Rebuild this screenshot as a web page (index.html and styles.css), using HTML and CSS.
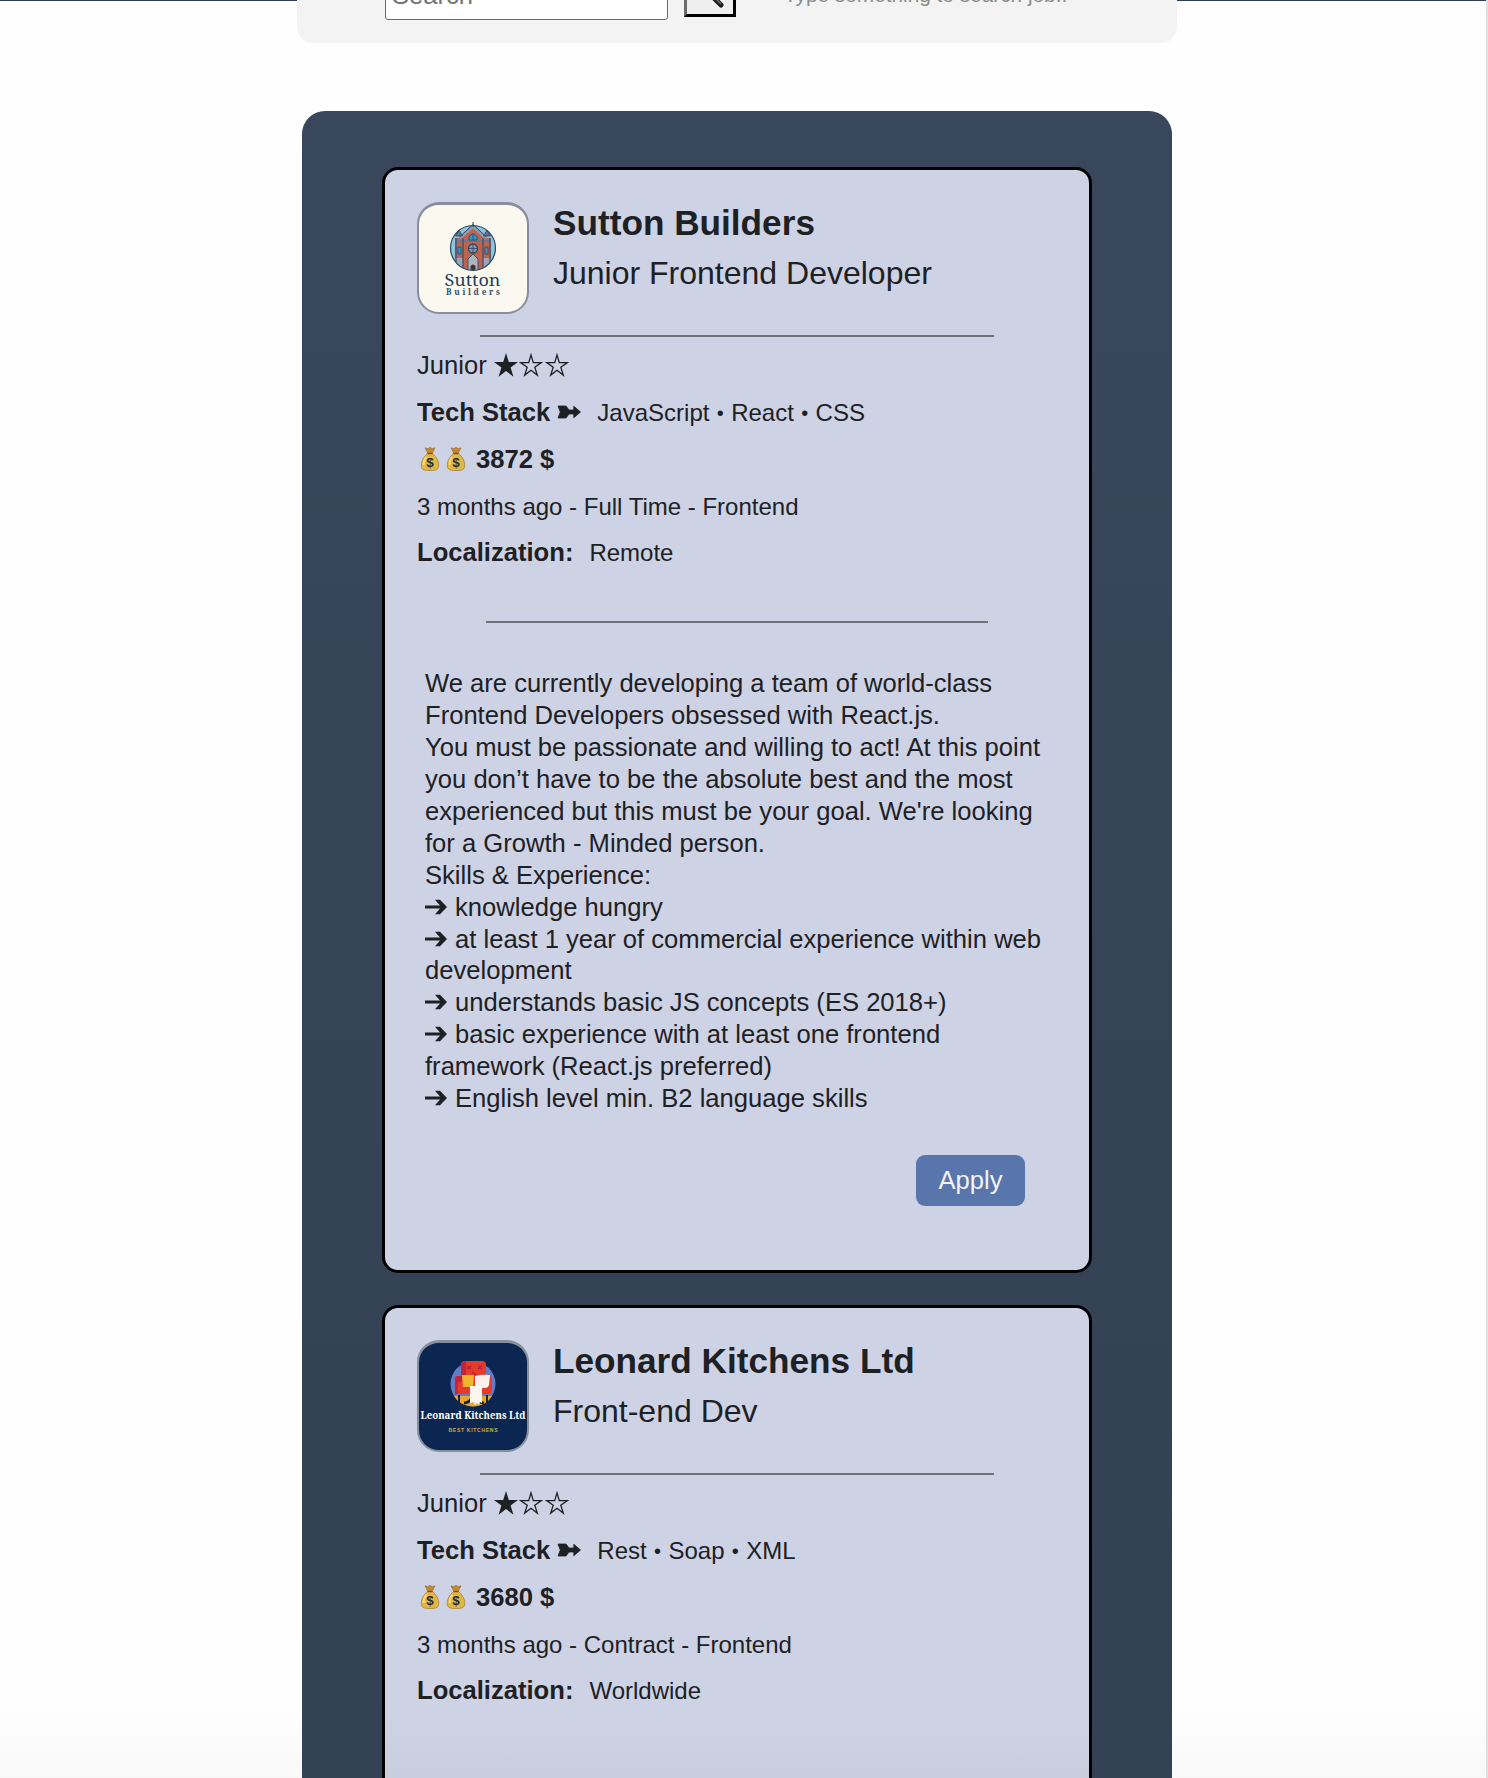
FILE: index.html
```html
<!DOCTYPE html>
<html lang="en">
<head>
<meta charset="utf-8">
<title>Job offers</title>
<link rel="stylesheet" href="styles.css">
</head>
<body>
<svg class="defs" width="0" height="0" aria-hidden="true">
  <symbol id="bag" viewBox="0 0 26 26">
    <path d="M8 1.800l3 1 2-1.600 2 1.600 3-1-3 6h-4z" fill="#c28a30" stroke="#9b6420" stroke-width=".6"/>
    <path d="M10.500 7.500C6.500 11 4.300 15 4.300 19c0 4.500 2 5.500 8.700 5.500s8.700-1 8.700-5.500c0-4-2.200-8-6.200-11.500z" fill="#e3b842" stroke="#a87420" stroke-width=".7"/>
    <path d="M9.500 11c-2 2-3 5-2.700 8" fill="none" stroke="#f6dc7a" stroke-width="2"/>
    <path d="M10.500 7.500h5" stroke="#8d4a1c" stroke-width="1.500"/>
    <text x="13" y="21" text-anchor="middle" font-family="Liberation Sans" font-size="13.500" font-weight="bold" fill="#2b2940">$</text>
  </symbol>
  <symbol id="star" viewBox="0 0 24 24"><path d="M12 0l2.800 9H24l-7.400 5.500 2.800 9.200L12 18l-7.400 5.700 2.800-9.200L0 9h9.200z" fill="#1d2124"/></symbol>
  <symbol id="star-open" viewBox="0 0 24 24"><path d="M12 1.900l2.300 7.700h8l-6.500 4.700 2.500 7.800-6.300-4.900-6.300 4.900 2.500-7.800-6.500-4.700h8z" fill="none" stroke="#1d2124" stroke-width="1.300"/></symbol>
  <symbol id="tail" viewBox="0 0 24 14"><path d="M1 1h8l3 4h4.800V1.300L23.500 7l-6.700 5.700V9H12l-3 4H1l2.300-6z" fill="#1d2124" stroke="#1d2124" stroke-width=".8" stroke-linejoin="round"/></symbol>
  <symbol id="arrow" viewBox="0 0 22 16"><path d="M0 6.400h15L10 .7h5L22 8l-7 7.300h-5l5-5.700H0z" fill="#1d2124"/></symbol>
</svg>
<main class="page">
  <form class="search">
    <input class="search-input" type="text" placeholder="Search">
    <button class="search-button" type="button" aria-label="Search">
      <svg width="46" height="46" viewBox="0 0 46 46"><circle cx="18" cy="21" r="9" fill="#b9d8ea" stroke="#333" stroke-width="3"/><path d="M24 27L34 37" stroke="#17191c" stroke-width="5" stroke-linecap="round"/><path d="M26 28L34 36" stroke="#68727a" stroke-width="1.500"/></svg>
    </button>
    <span class="hint">Type something to search job..</span>
  </form>
  <section class="offers">
    <article class="card">
      <header class="head">
        <div class="logo logo-cream">
          <svg width="108" height="107" viewBox="0 0 108 107">
            <defs><clipPath id="disc"><circle cx="54" cy="43" r="22"/></clipPath></defs>
            <circle cx="54" cy="43" r="22.500" fill="#8cc3df"/>
            <g clip-path="url(#disc)">
              <path d="M43 70V33l11-10 11 10v37z" fill="#bd6450"/>
              <path d="M36 33h8v35h-8zM64 33h8v35h-8z" fill="#b86552"/>
              <path d="M34 53h10v15H34zM64 53h10v15H64z" fill="#9da4b4"/>
              <path d="M36 36h36" stroke="#66798f" stroke-width="2"/>
              <path d="M44 33v34M64 33v34M37 33v34M71 33v34" stroke="#3c526c" stroke-width="1.300"/>
              <path d="M39 42h3v7h-3zM66 42h3v7h-3z" fill="#329bc9" stroke="#29455f" stroke-width=".8"/>
              <path d="M49 67V54l5-5 5 5v13z" fill="#aeb4c0" stroke="#3c526c"/>
              <path d="M51.500 67v-6q2.500-3 5 0v6z" fill="#4b3028"/>
            </g>
            <path d="M41 33l13-12 13 12" fill="none" stroke="#8f9bad" stroke-width="2.500"/>
            <path d="M40.500 32L54 19.500 67.500 32" fill="none" stroke="#34506c"/>
            <path d="M36.500 31l3.500-6 3.500 6zM64.500 31l3.500-6 3.500 6z" fill="#61738c" stroke="#2d4865" stroke-width=".8"/>
            <path d="M54 17v5" stroke="#29455f"/>
            <path d="M50 35v-3.500l4-3 4 3V35z" fill="#329bc9" stroke="#29455f" stroke-width=".8"/>
            <path d="M54 29v6" stroke="#29455f" stroke-width=".8"/>
            <circle cx="54" cy="43.500" r="4.500" fill="#8995a7" stroke="#2d4865" stroke-width="1.300"/>
            <path d="M54 39v9M49.500 43.500h9" stroke="#2d4865" stroke-width=".8"/>
            <circle cx="54" cy="43" r="22.500" fill="none" stroke="#29455f" stroke-width="1.200"/>
            <text x="25.500" y="81" class="serif" font-size="17" textLength="56" lengthAdjust="spacingAndGlyphs" fill="#233f5d">Sutton</text>
            <text x="27" y="90" class="serif" font-size="8.200" font-weight="bold" textLength="54" fill="#38516c">Builders</text>
          </svg>
        </div>
        <div class="names"><h2 class="company">Sutton Builders</h2><p class="role">Junior Frontend Developer</p></div>
      </header>
      <hr class="rule">
      <div class="row level"><span>Junior</span><span class="stars"><svg class="star"><use href="#star"/></svg><svg class="star"><use href="#star-open"/></svg><svg class="star"><use href="#star-open"/></svg></span></div>
      <div class="row"><b class="label">Tech Stack <svg class="tail"><use href="#tail"/></svg></b><span>JavaScript <i class="dot">•</i> React <i class="dot">•</i> CSS</span></div>
      <div class="row pay"><svg class="bag"><use href="#bag"/></svg><svg class="bag"><use href="#bag"/></svg><b class="amount">3872 $</b></div>
      <div class="row posted">3 months ago - Full Time - Frontend</div>
      <div class="row"><b class="label">Localization:</b><span>Remote</span></div>
      <hr class="rule rule-inner">
      <p class="description">We are currently developing a team of world-class<br>Frontend Developers obsessed with React.js.<br>You must be passionate and willing to act! At this point<br>you don’t have to be the absolute best and the most<br>experienced but this must be your goal. We're looking<br>for a Growth - Minded person.<br>Skills &amp; Experience:<br><svg class="arrow"><use href="#arrow"/></svg>knowledge hungry<br><svg class="arrow"><use href="#arrow"/></svg>at least 1 year of commercial experience within web<br>development<br><svg class="arrow"><use href="#arrow"/></svg>understands basic JS concepts (ES 2018+)<br><svg class="arrow"><use href="#arrow"/></svg>basic experience with at least one frontend<br>framework (React.js preferred)<br><svg class="arrow"><use href="#arrow"/></svg>English level min. B2 language skills</p>
      <button class="apply" type="button">Apply</button>
    </article>
    <article class="card card-short">
      <header class="head">
        <div class="logo logo-navy">
          <svg width="108" height="107" viewBox="0 0 108 107">
            <defs><clipPath id="disc2"><circle cx="54" cy="41" r="22.500"/></clipPath></defs>
            <circle cx="54" cy="41" r="22.500" fill="#647bc5"/>
            <path d="M31 53h46v14H31z" fill="#e9a72a" clip-path="url(#disc2)"/>
            <path d="M40 52v8M68 52v8" stroke="#172345" stroke-width="2"/>
            <path d="M45 60q5 0 8-5M65 60q-5 0-8-5" stroke="#172345" stroke-width="3" fill="none"/>
            <rect x="42" y="18" width="25" height="22" rx="4" fill="#e63a2c"/>
            <path d="M42 32V22q0-4 5-4v14z" fill="#c3263c"/>
            <path d="M48 23l4 3m0-3l-4 3M59 23l4 3m0-3l-4 3M53 29l4 3" stroke="#ad2036" stroke-width="1.300"/>
            <rect x="36" y="33" width="37" height="18" rx="3" fill="#e63a2c"/>
            <path d="M36 35q0-2 3-2h4v6h-4v12h-3z" fill="#c3263c"/>
            <path d="M43 32h12l-1 12H44z" fill="#f0b52f"/>
            <path d="M56 33q8-2 15-1l-1 10q-1 3-4 3H56z" fill="#fff1ea"/>
            <path d="M51 43h12v17l-2-1-1 3-2-2-2 2-2-3-3 1z" fill="#fff5ef"/>
            <text x="1.500" y="76" class="serif" font-size="9.800" font-weight="bold" textLength="105" lengthAdjust="spacingAndGlyphs" fill="#fff">Leonard Kitchens Ltd</text>
            <text x="29.500" y="89" font-family="Liberation Sans" font-size="5" font-weight="bold" textLength="49" fill="#d3ae43">BEST KITCHENS</text>
          </svg>
        </div>
        <div class="names"><h2 class="company">Leonard Kitchens Ltd</h2><p class="role">Front-end Dev</p></div>
      </header>
      <hr class="rule">
      <div class="row level"><span>Junior</span><span class="stars"><svg class="star"><use href="#star"/></svg><svg class="star"><use href="#star-open"/></svg><svg class="star"><use href="#star-open"/></svg></span></div>
      <div class="row"><b class="label">Tech Stack <svg class="tail"><use href="#tail"/></svg></b><span>Rest <i class="dot">•</i> Soap <i class="dot">•</i> XML</span></div>
      <div class="row pay"><svg class="bag"><use href="#bag"/></svg><svg class="bag"><use href="#bag"/></svg><b class="amount">3680 $</b></div>
      <div class="row posted">3 months ago - Contract - Frontend</div>
      <div class="row"><b class="label">Localization:</b><span>Worldwide</span></div>
    </article>
  </section>
</main>
</body>
</html>
```
FILE: styles.css
```css
* { box-sizing: border-box; }
body { margin: 0; font-family: "Liberation Sans", Arial, sans-serif; color: #1d2124; }
.defs { display: block; height: 0; }
.page { display: flow-root; height: 1778px; overflow: hidden; border-right: 2px solid #e0e0e0; background: linear-gradient(#2f3c55, #2f3c55) top / 100% 1px no-repeat, linear-gradient(#fefefe 1710px, #f8f8f8 1778px); }
.search { display: flex; align-items: flex-start; width: 880px; height: 86px; margin: -43px 0 0 297px; padding-left: 88px; background: #f3f3f3; border-radius: 16px; }
.search-input { width: 283px; height: 50px; margin-top: 13px; padding: 0 6px; font: 25.6px "Liberation Sans", Arial, sans-serif; border: 1px solid #6b6b6b; border-radius: 3px; background: #fff; }
.search-input::placeholder { color: #757575; }
.search-button { width: 52px; height: 52px; margin: 8px 0 0 16px; padding: 0; border: 3px outset #333; border-color: #6a6a6a #1e1e1e #1e1e1e #6a6a6a; background: #efefef; }
.search-button svg { display: block; }
.hint { margin: 26px 0 0 48px; font-size: 20.800px; line-height: 24px; color: #8b8b8b; white-space: nowrap; }
.offers { width: 870px; height: 1900px; margin: 68px 0 0 302px; padding: 56px 80px; border-radius: 23px; background: linear-gradient(#38475c, #354356 55%, #334155); }
.card { display: flex; flex-direction: column; height: 1106px; margin-bottom: 32px; padding: 32px; border: 3px solid #000; border-radius: 16px; background: #cdd2e5; }
.card-short { height: 488px; background: linear-gradient(#cdd2e5 85%, #c8cddd); }
.head { display: flex; gap: 24px; height: 112px; }
.logo { width: 112px; height: 112px; overflow: hidden; border: 2px solid #888e9b; border-top-width: 3px; border-radius: 22px; }
.logo svg { display: block; }
.logo-cream { background: #fbf8ef; }
.logo-navy { background: #0b2650; }
.serif { font-family: "Noto Serif", "DejaVu Serif", serif; }
.company { margin: 0; font-size: 35.200px; line-height: 41px; white-space: nowrap; }
.role { margin: 10px 0 0; font-size: 32px; line-height: 40px; white-space: nowrap; }
.rule { flex: none; align-self: center; width: 514px; height: 2px; margin: 21px 0 5px; border: 0; background: #70737c; }
.row { display: flex; align-items: baseline; height: 47px; line-height: 47px; font-size: 24px; white-space: pre; }
.level, .pay, .label { font-size: 25.600px; }
.label { margin-right: 16px; }
.stars { display: flex; gap: 1.600px; align-self: center; margin: 0 0 2px 7px; }
.star { width: 24px; height: 24px; }
.tail { width: 24px; height: 14px; vertical-align: 2px; }
.dot { display: inline-block; width: 8.400px; font-size: 20px; font-style: normal; text-align: center; line-height: 20px; vertical-align: 1.500px; }
.level, .pay { align-items: center; }
.posted { height: 46px; }
.bag { width: 26px; height: 26px; margin-bottom: 2px; }
.amount { margin-left: 7px; }
.rule-inner { width: 502px; margin: 45px 0 45px; }
.description { margin: 0 0 0 8px; font-size: 25.600px; line-height: 31.930px; white-space: nowrap; }
.arrow { width: 22px; height: 16px; margin-right: 8px; vertical-align: 1px; }
.apply { align-self: flex-end; width: 109px; height: 51px; margin: 40px 32px 0 0; padding: 0; border: 0; border-radius: 9px; background: #5875ac; color: #f3f3f3; font: 25.600px "Liberation Sans", Arial, sans-serif; }
```
